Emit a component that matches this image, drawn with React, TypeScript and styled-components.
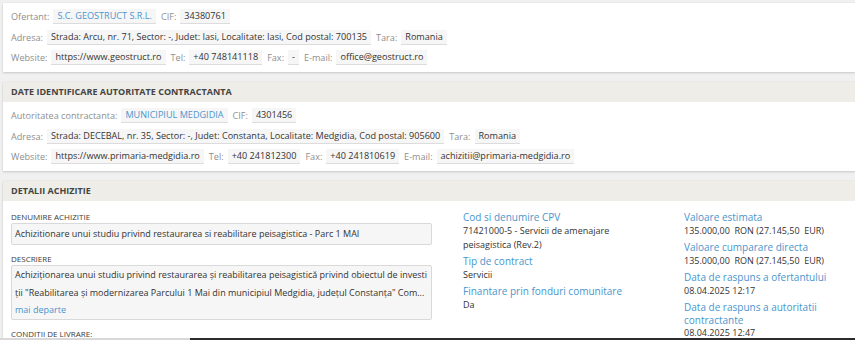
import React, { FC } from 'react'
import styled, { createGlobalStyle } from 'styled-components'

const colors = {
  page: '#f0f0f0',
  panel: '#ffffff',
  band: '#eeede7',
  text: '#333333',
  muted: '#8e8e8e',
  link: '#4a95cd',
  chip: '#f6f6f6',
  chipLine: '#dcdcdc',
  boxLine: '#d9d9d9',
}

const GlobalStyle = createGlobalStyle`
  html, body {
    margin: 0;
    padding: 0;
    background: ${colors.page};
    font-family: 'Open Sans', 'DejaVu Sans', sans-serif;
    color: ${colors.text};
    overflow: hidden;
  }
`

const Page = styled.div`
  padding: 3px 0 0 3px;
  height: 337px;
  overflow: hidden;
`

const Panel = styled.section`
  background: ${colors.panel};
  box-shadow: 0 1px 2px rgba(0, 0, 0, 0.16), 0 0 1px rgba(0, 0, 0, 0.08);
  margin-bottom: 10px;
`

const PanelHeader = styled.h2`
  margin: 0;
  height: 20px;
  line-height: 20px;
  padding: 0 8px;
  background: ${colors.band};
  font-size: 9px;
  font-weight: 700;
  color: #444;
  text-transform: uppercase;
`

const PanelBody = styled.div`
  display: flex;
  flex-direction: column;
  gap: 5.5px;
  padding: 6px 8px 7px;
`

const FieldRow = styled.div`
  display: flex;
  align-items: center;
  height: 15px;
  font-size: 9.1px;
  white-space: nowrap;
`

const FieldLabel = styled.span`
  color: ${colors.muted};
  margin-right: 4px;
`

const FieldValue = styled.span<{ $link?: boolean }>`
  display: inline-block;
  height: 14px;
  line-height: 14px;
  padding: 0 4px;
  margin-right: 5px;
  background: ${colors.chip};
  border-bottom: 1px solid ${colors.chipLine};
  color: ${({ $link }) => ($link ? colors.link : colors.text)};
`

const DetailGrid = styled.div`
  display: grid;
  grid-template-columns: 421px 190px 1fr;
  column-gap: 31px;
  padding: 10px 8px 0;
`

const Column = styled.div`
  display: flex;
  flex-direction: column;
`

const BlockLabel = styled.div<{ $spaced?: boolean }>`
  font-size: 8px;
  line-height: 12px;
  text-transform: uppercase;
  color: #3a3a3a;
  margin-top: ${({ $spaced }) => ($spaced ? '8px' : '0')};
`

const TextBox = styled.div`
  background: ${colors.chip};
  border: 1px solid ${colors.boxLine};
  border-radius: 2px;
  padding: 0 3px;
  font-size: 9px;
  line-height: 20px;
  color: ${colors.text};
  white-space: nowrap;
`

const Description = styled(TextBox)`
  line-height: 17.5px;
`

const Line = styled.span`
  display: block;
`

const MoreLink = styled.a`
  display: block;
  color: ${colors.link};
  text-decoration: none;
`

const InfoBlock = styled.div`
  margin-bottom: 3.5px;
`

const InfoTitle = styled.div`
  font-size: 10px;
  line-height: 12.5px;
  color: ${colors.link};
`

const InfoValue = styled.div`
  font-size: 9px;
  line-height: 14px;
  color: ${colors.text};
`

const BottomBar = styled.div`
  position: fixed;
  left: 0;
  right: 0;
  bottom: 0;
  height: 2px;
  display: flex;
`

const BarSegment = styled.div<{ $dark?: boolean }>`
  flex: ${({ $dark }) => ($dark ? '1' : '0 0 190px')};
  background: ${({ $dark }) => ($dark ? '#2b2b2b' : '#d8d8d8')};
`

type Field = { label: string; value: string; link?: boolean }

const FieldLine: FC<{ fields: Field[] }> = ({ fields }) => (
  <FieldRow>
    {fields.map((f) => (
      <React.Fragment key={f.label}>
        <FieldLabel>{f.label}</FieldLabel>
        <FieldValue $link={f.link}>{f.value}</FieldValue>
      </React.Fragment>
    ))}
  </FieldRow>
)

const Info: FC<{ title: string; lines: string[] }> = ({ title, lines }) => (
  <InfoBlock>
    <InfoTitle>{title}</InfoTitle>
    {lines.map((l) => (
      <InfoValue key={l}>{l}</InfoValue>
    ))}
  </InfoBlock>
)

const App: FC = () => (
  <>
    <GlobalStyle />
    <Page>
      <Panel>
        <PanelBody>
          <FieldLine
            fields={[
              { label: 'Ofertant:', value: 'S.C. GEOSTRUCT S.R.L.', link: true },
              { label: 'CIF:', value: '34380761' },
            ]}
          />
          <FieldLine
            fields={[
              {
                label: 'Adresa:',
                value:
                  'Strada: Arcu, nr. 71, Sector: -, Judet: Iasi, Localitate: Iasi, Cod postal: 700135',
              },
              { label: 'Tara:', value: 'Romania' },
            ]}
          />
          <FieldLine
            fields={[
              { label: 'Website:', value: 'https://www.geostruct.ro' },
              { label: 'Tel:', value: '+40 748141118' },
              { label: 'Fax:', value: '-' },
              { label: 'E-mail:', value: 'office@geostruct.ro' },
            ]}
          />
        </PanelBody>
      </Panel>

      <Panel>
        <PanelHeader>Date identificare autoritate contractanta</PanelHeader>
        <PanelBody>
          <FieldLine
            fields={[
              { label: 'Autoritatea contractanta:', value: 'MUNICIPIUL MEDGIDIA', link: true },
              { label: 'CIF:', value: '4301456' },
            ]}
          />
          <FieldLine
            fields={[
              {
                label: 'Adresa:',
                value:
                  'Strada: DECEBAL, nr. 35, Sector: -, Judet: Constanta, Localitate: Medgidia, Cod postal: 905600',
              },
              { label: 'Tara:', value: 'Romania' },
            ]}
          />
          <FieldLine
            fields={[
              { label: 'Website:', value: 'https://www.primaria-medgidia.ro' },
              { label: 'Tel:', value: '+40 241812300' },
              { label: 'Fax:', value: '+40 241810619' },
              { label: 'E-mail:', value: 'achizitii@primaria-medgidia.ro' },
            ]}
          />
        </PanelBody>
      </Panel>

      <Panel>
        <PanelHeader>Detalii achizitie</PanelHeader>
        <DetailGrid>
          <Column>
            <BlockLabel>Denumire achizitie</BlockLabel>
            <TextBox>
              Achizitionare unui studiu privind restaurarea si reabilitare peisagistica - Parc 1 MAI
            </TextBox>
            <BlockLabel $spaced>Descriere</BlockLabel>
            <Description>
              <Line>
                Achiziționarea unui studiu privind restaurarea și reabilitarea peisagistică privind
                obiectul de investi
              </Line>
              <Line>
                ții "Reabilitarea și modernizarea Parcului 1 Mai din municipiul Medgidia, județul
                Constanța" Com...
              </Line>
              <MoreLink href="#">mai departe</MoreLink>
            </Description>
            <BlockLabel $spaced>Conditii de livrare:</BlockLabel>
          </Column>
          <Column>
            <Info
              title="Cod si denumire CPV"
              lines={['71421000-5 - Servicii de amenajare peisagistica (Rev.2)']}
            />
            <Info title="Tip de contract" lines={['Servicii']} />
            <Info title="Finantare prin fonduri comunitare" lines={['Da']} />
          </Column>
          <Column>
            <Info
              title="Valoare estimata"
              lines={['135.000,00\u00a0 RON (27.145,50\u00a0 EUR)']}
            />
            <Info
              title="Valoare cumparare directa"
              lines={['135.000,00\u00a0 RON (27.145,50\u00a0 EUR)']}
            />
            <Info title="Data de raspuns a ofertantului" lines={['08.04.2025 12:17']} />
            <Info title="Data de raspuns a autoritatii contractante" lines={['08.04.2025 12:47']} />
          </Column>
        </DetailGrid>
      </Panel>
    </Page>
    <BottomBar>
      <BarSegment />
      <BarSegment $dark />
    </BottomBar>
  </>
)

export default App
